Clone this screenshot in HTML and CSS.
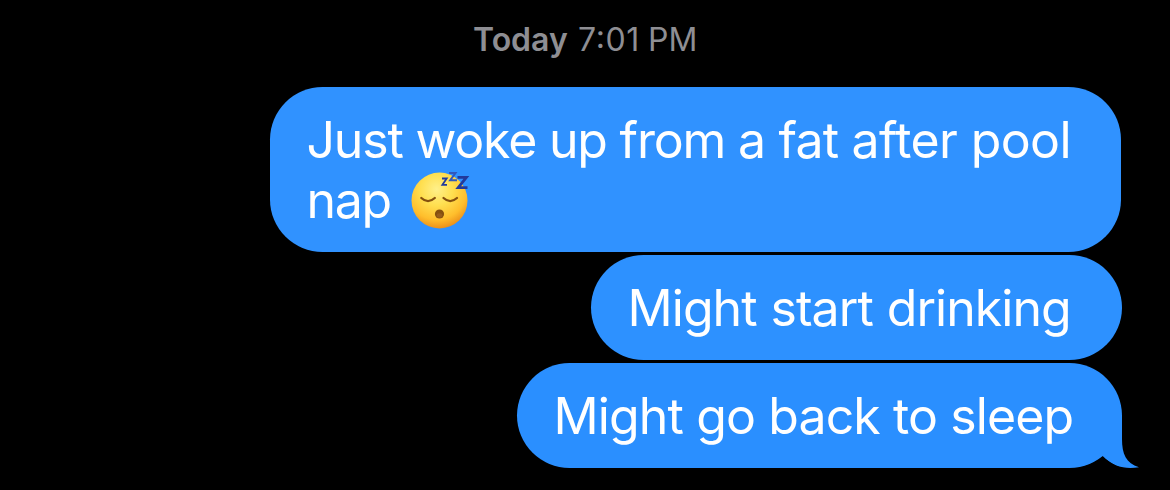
FILE: index.html
```html
<!DOCTYPE html>
<html lang="en">
<head>
<meta charset="utf-8">
<title>Messages</title>
<link rel="stylesheet" href="styles.css">
</head>
<body>
<main class="thread">
  <header class="stamp"><span class="day">Today</span><span class="time">7:01</span><span class="meridiem">PM</span></header>
  <section class="messages">
    <div class="bubble first">
      <div class="line line-a"><span class="tight">Just woke up from </span><span class="medium">a fat </span><span class="loose">after pool</span></div>
      <div class="line line-b"><span class="nap">nap</span><svg class="emoji" viewBox="0 0 60 60" role="img" aria-label="Sleeping face">
        <defs>
          <radialGradient id="face" cx="0.45" cy="0.3" r="0.72">
            <stop offset="0" stop-color="#fff08a"/>
            <stop offset="0.4" stop-color="#ffdf50"/>
            <stop offset="0.75" stop-color="#ffbe2c"/>
            <stop offset="1" stop-color="#e98a18"/>
          </radialGradient>
        </defs>
        <circle cx="29.5" cy="30.5" r="28" fill="url(#face)"/>
        <g fill="none" stroke="#85500f" stroke-width="2.3" stroke-linecap="round">
          <path d="M11.3 28Q18 34.2 24.8 28"/>
          <path d="M33.5 28Q40.2 34.2 47 28"/>
        </g>
        <circle cx="29.5" cy="44" r="4.6" fill="#86500f"/>
        <ellipse cx="29.5" cy="45.4" rx="2.8" ry="2.2" fill="#965c1c"/>
        <g fill="none" stroke="#223a9c" stroke-linejoin="miter">
          <path d="M32 8.5H36.7L32.4 14.8H37" stroke-width="1.8"/>
          <path d="M39 3H45.5L40.2 10.2H47" stroke-width="2" stroke="#3159bd"/>
          <path d="M47.5 7.3H56.4L48.2 17.7H57.5" stroke-width="2.8"/>
        </g>
      </svg></div>
    </div>
    <div class="bubble second"><div class="line line-c">Might start drinking</div></div>
    <div class="bubble third"><div class="line line-d">Might go back to sleep</div>
      <svg class="tail" viewBox="0 0 50 50" aria-hidden="true">
        <path class="fin" d="M26 -3H50V21C50 36 54 45 67 49.2C53 51.5 41 48.5 31 38.5L26 34Z"/>
        <path class="gap" d="M2 50.5C13 49.3 22 45.8 31 38.5C38 45.5 45 49 54 50.5Z"/>
      </svg>
    </div>
  </section>
</main>
</body>
</html>
```
FILE: styles.css
```css
body {
  margin: 0;
  background: #000;
  font-family: Inter, "Liberation Sans", sans-serif;
}

.thread {
  height: 490px;
  overflow: hidden;
}

.stamp {
  display: flex;
  height: 87px;
  padding: 20px 0 0 473px;
  box-sizing: border-box;
  color: #8e8e93;
  font-size: 32px;
  line-height: 40px;
  white-space: nowrap;
}

.day {
  width: 105px;
  font-weight: 600;
}

.time {
  width: 70px;
  letter-spacing: 0.6px;
  font-feature-settings: "case";
}

.messages {
  display: flex;
  flex-direction: column;
  align-items: flex-end;
  gap: 3px;
  padding-right: 48px;
}

.bubble {
  position: relative;
  box-sizing: border-box;
  padding: 22.5px 36.5px;
  border-radius: 52.5px;
  color: #fff;
  font-size: 50px;
  line-height: 60px;
  white-space: nowrap;
}

.first {
  width: 851px;
  margin-right: 1px;
  background: #3092ff;
}

.second {
  width: 531px;
  background: #2d91ff;
}

.third {
  width: 605px;
  background: #2a8fff;
}

.line {
  height: 60px;
}

.tight {
  letter-spacing: -1.2px;
}

.medium {
  letter-spacing: -0.8px;
}

.loose {
  letter-spacing: -0.6px;
}

.line-b {
  display: flex;
  letter-spacing: -1.3px;
}

.line-c {
  letter-spacing: -0.95px;
  word-spacing: 0.8px;
}

.line-d {
  letter-spacing: -0.88px;
}

.nap {
  width: 103px;
}

.emoji {
  width: 60px;
  height: 60px;
}

.tail {
  position: absolute;
  right: 0;
  bottom: 0;
  width: 50px;
  height: 50px;
  overflow: visible;
}

.gap {
  fill: #000;
}

.fin {
  fill: #2a8fff;
}
```
